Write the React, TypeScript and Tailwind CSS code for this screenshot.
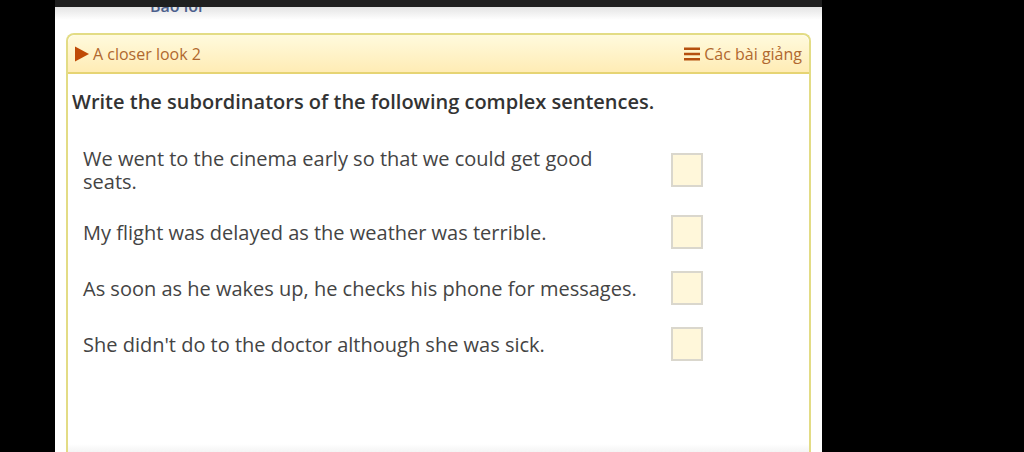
const sentences = [
  "We went to the cinema early so that we could get good seats.",
  "My flight was delayed as the weather was terrible.",
  "As soon as he wakes up, he checks his phone for messages.",
  "She didn't do to the doctor although she was sick.",
];

function LessonHeader() {
  return (
    <header className="flex h-[39px] items-center justify-between rounded-t-lg border-b-2 border-[#e6d473] bg-linear-to-b from-[#fffadd] to-[#ffecb5] px-[7px] text-[16px] leading-5 text-[#b0682f]">
      <a href="#lesson" className="flex items-center gap-1">
        <svg viewBox="0 0 14 16" className="h-4 w-3.5 fill-[#bf4a06]" aria-hidden="true">
          <path d="M0 0.5 L14 8 L0 15.5 Z" />
        </svg>
        A closer look 2
      </a>
      <button type="button" className="flex items-center gap-1">
        <svg viewBox="0 0 16 14" className="h-3.5 w-4 fill-[#b5500f]" aria-hidden="true">
          <path d="M0 0.5h16v2.6H0zM0 5.7h16v2.6H0zM0 10.9h16v2.6H0z" />
        </svg>
        Các bài giảng
      </button>
    </header>
  );
}

function Exercise() {
  return (
    <form className="flex flex-col">
      <h1 className="px-1 pt-4 pb-[22px] text-[20px] leading-6 font-semibold text-[#333333]">
        Write the subordinators of the following complex sentences.
      </h1>
      <ol className="pl-[15px]">
        {sentences.map((sentence, index) => (
          <li
            key={sentence}
            className="grid grid-cols-[minmax(0,568px)_32px] items-center gap-5 py-[11px]"
          >
            <label
              htmlFor={`answer_${index}`}
              className="text-[20px] leading-[23px] text-[#444444]"
            >
              {sentence}
            </label>
            <input
              id={`answer_${index}`}
              name={`answer_${index}`}
              type="text"
              className="h-[34px] w-8 border-2 border-[#dad7cd] bg-[#fff7da] text-center outline-none"
            />
          </li>
        ))}
      </ol>
    </form>
  );
}

export default function App() {
  return (
    <div className="flex min-h-screen bg-black pr-[202px] pl-[55px] font-['Open_Sans','Noto_Sans',sans-serif]">
      <main className="flex flex-1 flex-col bg-white">
        <div className="h-[7px] bg-[#1f1f1f]" />
        <div className="flex h-[26px] items-start overflow-hidden bg-linear-to-b from-[#e4e4e4] via-white to-white pl-[95px]">
          <div className="flex h-[9px] items-end overflow-hidden">
            <a href="#report" className="text-[16px] leading-5 font-semibold text-[#4c5f8d]">
              Báo lỗi
            </a>
          </div>
        </div>
        <section className="mx-[11px] flex flex-1 flex-col rounded-t-lg border-2 border-b-0 border-[#e3dc85] bg-white">
          <LessonHeader />
          <Exercise />
          <div className="mt-auto h-2 bg-linear-to-b from-white to-[#f4f4f4]" />
        </section>
      </main>
    </div>
  );
}
